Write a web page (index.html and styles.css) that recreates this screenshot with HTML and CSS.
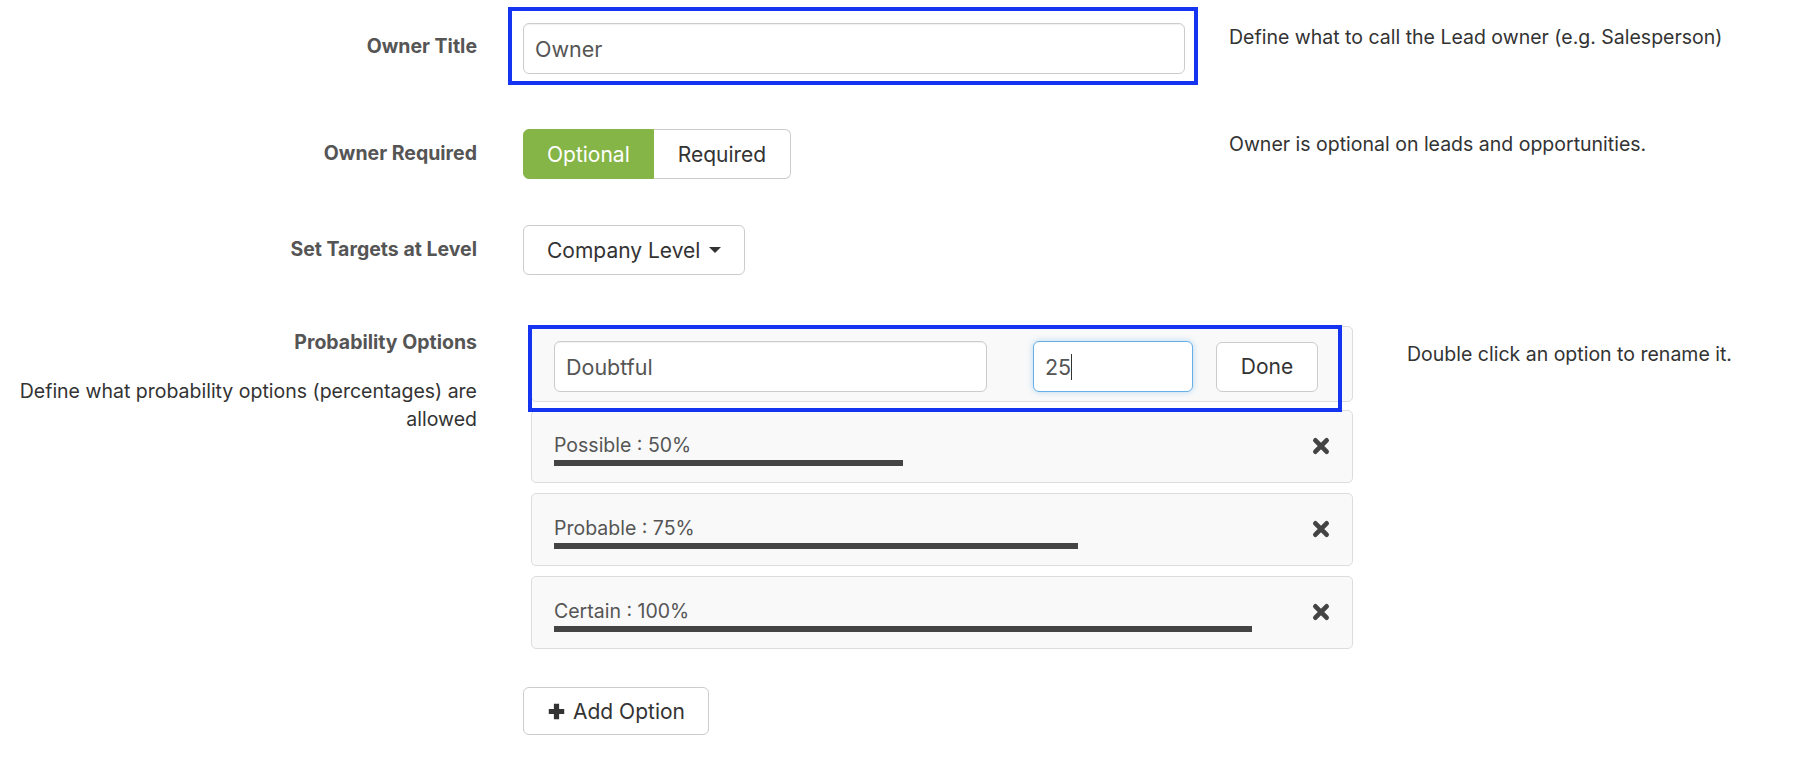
FILE: index.html
```html
<!DOCTYPE html>
<html lang="en">
<head>
    <meta charset="UTF-8">
    <meta name="viewport" content="width=device-width, initial-scale=1.0">
    <title>Lead Settings</title>
    <link rel="stylesheet" href="styles.css">
</head>
<body>
    <div class="settings">
        <!-- owner title -->
        <div class="row row-title">
            <div class="row-label">Owner Title</div>
            <div class="row-control">
                <input class="field owner-field" type="text" value="Owner">
                <div class="highlight highlight-title"></div>
            </div>
            <div class="row-help">Define what to call the Lead owner (e.g. Salesperson)</div>
        </div>

        <!-- owner required -->
        <div class="row row-required">
            <div class="row-label">Owner Required</div>
            <div class="row-control">
                <div class="btn-group">
                    <div class="btn btn-active">Optional</div>
                    <div class="btn">Required</div>
                </div>
            </div>
            <div class="row-help">Owner is optional on leads and opportunities.</div>
        </div>

        <!-- targets -->
        <div class="row row-targets">
            <div class="row-label">Set Targets at Level</div>
            <div class="row-control">
                <div class="btn">Company Level <span class="caret"></span></div>
            </div>
            <div class="row-help"></div>
        </div>

        <!-- probability options -->
        <div class="row row-prob">
            <div class="row-label">
                Probability Options
                <p class="label-desc">Define what probability options (percentages) are allowed</p>
            </div>
            <div class="row-control prob-control">
                <div class="options">
                    <div class="option option-edit">
                        <input class="field name-field" type="text" value="Doubtful">
                        <div class="field pct-field">25<span class="text-cursor"></span></div>
                        <div class="btn done-btn">Done</div>
                    </div>
                    <div class="highlight highlight-edit"></div>

                    <div class="option">
                        <div class="option-body">
                            <div class="option-name">Possible : 50%</div>
                            <div class="option-bar" style="width: 50%"></div>
                        </div>
                        <svg class="remove" viewBox="0 0 16 16" width="18" height="18"><path d="M3 3 L13 13 M13 3 L3 13" stroke="#444" stroke-width="4.2" stroke-linecap="round"/></svg>
                    </div>
                    <div class="option">
                        <div class="option-body">
                            <div class="option-name">Probable : 75%</div>
                            <div class="option-bar" style="width: 75%"></div>
                        </div>
                        <svg class="remove" viewBox="0 0 16 16" width="18" height="18"><path d="M3 3 L13 13 M13 3 L3 13" stroke="#444" stroke-width="4.2" stroke-linecap="round"/></svg>
                    </div>
                    <div class="option">
                        <div class="option-body">
                            <div class="option-name">Certain : 100%</div>
                            <div class="option-bar" style="width: 100%"></div>
                        </div>
                        <svg class="remove" viewBox="0 0 16 16" width="18" height="18"><path d="M3 3 L13 13 M13 3 L3 13" stroke="#444" stroke-width="4.2" stroke-linecap="round"/></svg>
                    </div>
                </div>
                <div class="btn add-btn">
                    <svg viewBox="0 0 16 16" width="19" height="19"><path d="M8 1.5 V14.5 M1.5 8 H14.5" stroke="#333" stroke-width="4.4"/></svg>
                    Add Option
                </div>
            </div>
            <div class="row-help help-prob">Double click an option to rename it.</div>
        </div>
    </div>
</body>
</html>
```

FILE: styles.css
```css
* {
    box-sizing: border-box;
}

body {
    margin: 0;
    background-color: #ffffff;
    font-family: Inter, "Noto Sans", sans-serif;
    color: #333333;
}

.settings {
    padding-top: 23px;
}

.row {
    display: flex;
    align-items: flex-start;
}

.row-label {
    width: 477px;
    flex: none;
    text-align: right;
    font-size: 19.5px;
    font-weight: 700;
    line-height: 24px;
    color: #555555;
}

.row-control {
    position: relative;
    width: 660px;
    flex: none;
    margin-left: 46px;
}

.row-help {
    margin-left: 46px;
    font-size: 19.5px;
    line-height: 24px;
    color: #333333;
}

/* row spacing */
.row-title {
    margin-bottom: 55px;
}
.row-title .row-label {
    padding-top: 11px;
}
.row-title .row-help {
    padding-top: 2px;
}

.row-required {
    margin-bottom: 46px;
}
.row-required .row-label {
    padding-top: 12px;
}
.row-required .row-help {
    padding-top: 3px;
}

.row-targets {
    margin-bottom: 51px;
}
.row-targets .row-label {
    padding-top: 12px;
}

.row-prob .row-label {
    padding-top: 4px;
}

.label-desc {
    margin: 24px 0 0 0;
    font-size: 19.5px;
    font-weight: 400;
    line-height: 27.5px;
    color: #333333;
}

/* inputs */
.field {
    display: block;
    height: 51px;
    padding: 0 11px;
    border: 1px solid #cccccc;
    border-radius: 6px;
    background-color: #ffffff;
    font-family: Inter, "Noto Sans", sans-serif;
    font-size: 21.5px;
    color: #555555;
    outline: none;
    box-shadow: inset 0 1px 1px rgba(0, 0, 0, 0.06);
}

.owner-field {
    width: 662px;
}

/* buttons */
.btn-group {
    display: flex;
}

.btn {
    display: inline-flex;
    align-items: center;
    height: 50px;
    padding: 0 23px;
    border: 1px solid #cccccc;
    border-radius: 6px;
    background-color: #ffffff;
    font-size: 21px;
    color: #333333;
}

.btn-group .btn:first-child {
    border-top-right-radius: 0;
    border-bottom-right-radius: 0;
}

.btn-group .btn:last-child {
    border-left: none;
    padding: 0 24px;
    border-top-left-radius: 0;
    border-bottom-left-radius: 0;
}

.btn-active {
    background-color: #85b546;
    border-color: #85b546;
    color: #ffffff;
}

.caret {
    display: inline-block;
    width: 0;
    height: 0;
    margin-left: 9px;
    border-top: 6px solid #333333;
    border-left: 6px solid transparent;
    border-right: 6px solid transparent;
}

/* probability options */
.prob-control {
    width: 830px;
}

.options {
    position: relative;
    margin-left: 8px;
    width: 822px;
}

.option {
    display: flex;
    align-items: center;
    margin-bottom: 10px;
    padding: 22px 22px 16px 22px;
    border: 1px solid #dddddd;
    border-radius: 5px;
    background-color: #f9f9f9;
}

.option-edit {
    margin-bottom: 8px;
    padding: 14px 0 9px 22px;
}

.name-field {
    width: 433px;
}

.pct-field {
    display: flex;
    align-items: center;
    width: 160px;
    margin-left: 46px;
    border-color: #66afe9;
    box-shadow: 0 0 6px rgba(102, 175, 233, 0.45);
}

.text-cursor {
    display: inline-block;
    width: 1px;
    height: 26px;
    background-color: #333333;
}

.done-btn {
    width: 102px;
    margin-left: 23px;
    justify-content: center;
    padding: 0;
}

.option-body {
    width: 698px;
}

.option-name {
    font-size: 19.5px;
    line-height: 24px;
    color: #555555;
}

.option-bar {
    height: 6px;
    margin-top: 3px;
    background-color: #444444;
}

.remove {
    margin-left: auto;
    margin-right: 0;
    margin-top: -8px;
}

.add-btn {
    margin-top: 28px;
    height: 48px;
    padding: 0 23px 0 23px;
}

.add-btn svg {
    margin-right: 7px;
}

.help-prob {
    margin-left: 54px;
    padding-top: 16px;
}

/* screenshot annotation boxes */
.highlight {
    position: absolute;
    border: 4px solid #1434f2;
    pointer-events: none;
}

.highlight-title {
    left: -15px;
    top: -16px;
    width: 690px;
    height: 78px;
}

.highlight-edit {
    left: -3px;
    top: -1px;
    width: 814px;
    height: 87px;
}
```
